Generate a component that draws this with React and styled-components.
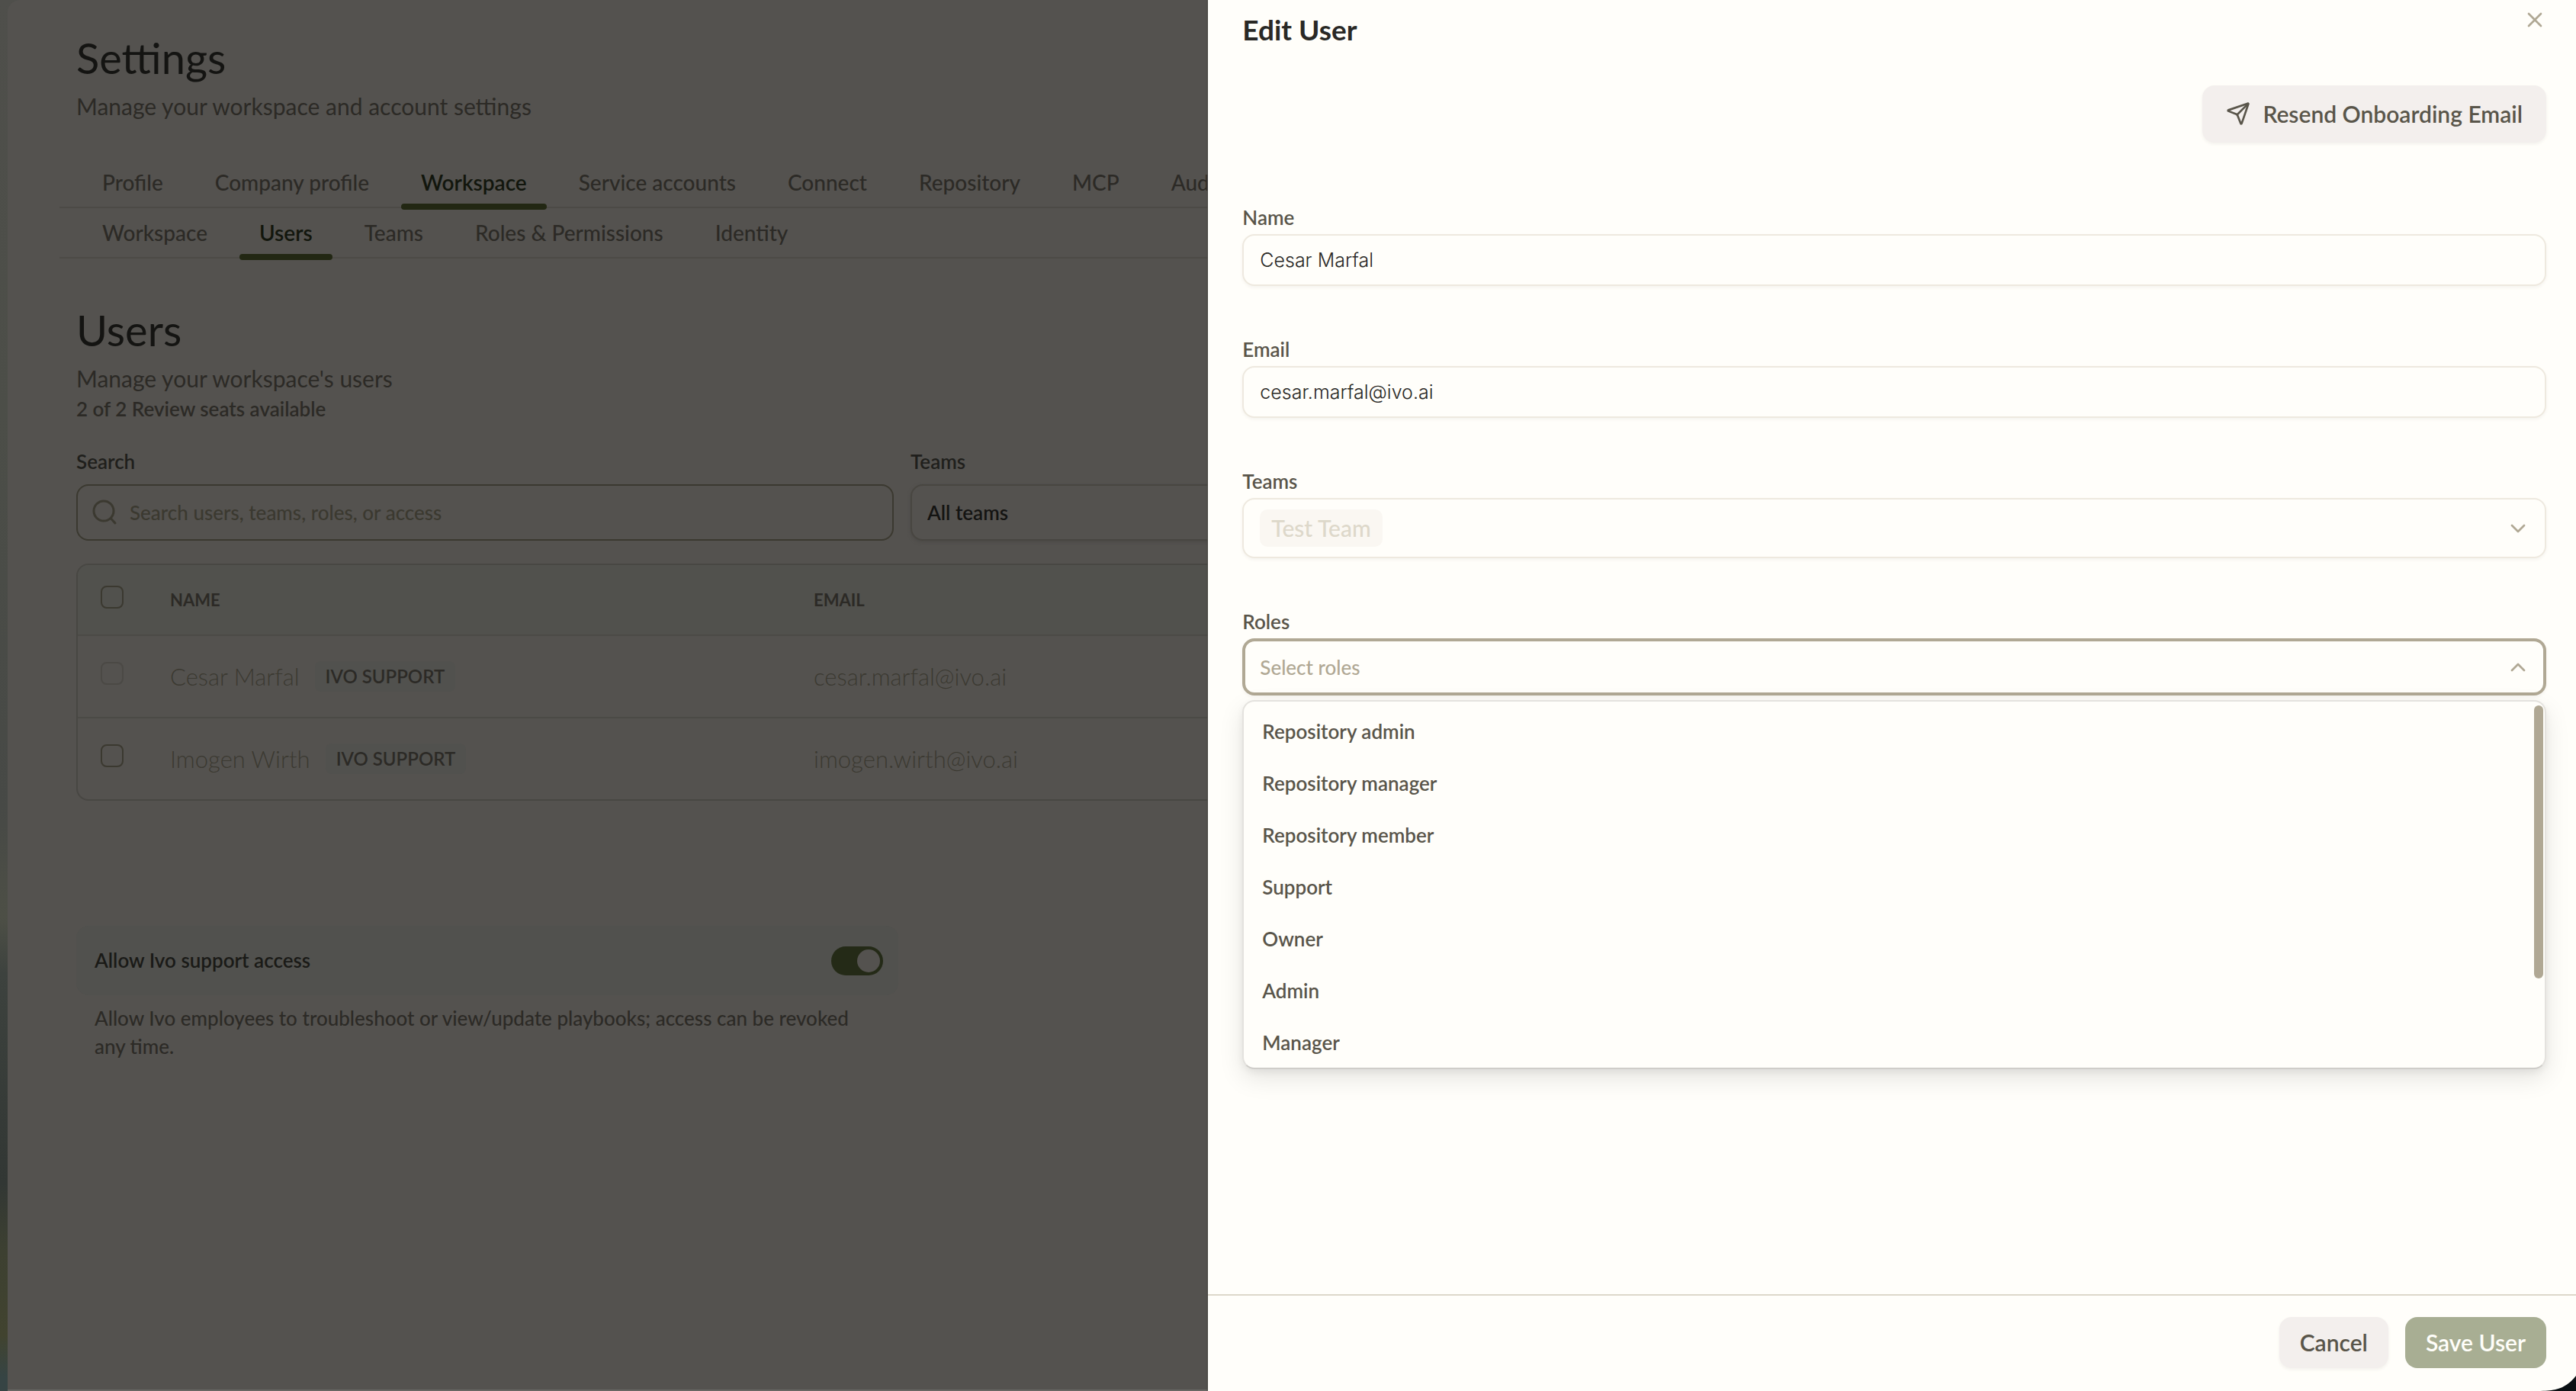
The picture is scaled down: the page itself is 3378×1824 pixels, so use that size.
import React, { useState } from 'react'
import styled, { createGlobalStyle } from 'styled-components'
import { ChevronDown, ChevronUp, Send, X } from 'lucide-react'

const tabs = ['Profile', 'Company profile', 'Workspace', 'Service accounts', 'Connect', 'Repository', 'MCP', 'Aud']
const subTabs = ['Workspace', 'Users', 'Teams', 'Roles & Permissions', 'Identity']
const users = [
  { name: 'Cesar Marfal', email: 'cesar.marfal@ivo.ai', locked: true },
  { name: 'Imogen Wirth', email: 'imogen.wirth@ivo.ai', locked: false },
]
const roles = ['Repository admin', 'Repository manager', 'Repository member', 'Support', 'Owner', 'Admin', 'Manager']

const SearchIcon = () => (
  <svg width="34" height="34" viewBox="0 0 34 34" fill="none" stroke="currentColor" strokeWidth="3" strokeLinecap="round" aria-hidden="true">
    <circle cx="16" cy="15" r="13" />
    <path d="M25.5 25 31 31" />
  </svg>
)

const TabBar = ({ items, active, label }) => (
  <Tabs aria-label={label}>
    {items.map((item) => (
      <Tab key={item} href="#" $active={item === active}>{item}</Tab>
    ))}
  </Tabs>
)

const SettingsPage = () => {
  const [query, setQuery] = useState('')
  return (
    <Page>
      <Title>Settings</Title>
      <Subtitle>Manage your workspace and account settings</Subtitle>
      <TabGroup>
        <TabBar items={tabs} active="Workspace" label="Settings" />
        <TabBar items={subTabs} active="Users" label="Workspace" />
      </TabGroup>
      <SectionTitle>Users</SectionTitle>
      <Subtitle>Manage your workspace's users</Subtitle>
      <Seats>2 of 2 Review seats available</Seats>
      <Filters>
        <Filter>
          <FilterLabel htmlFor="search">Search</FilterLabel>
          <SearchBox>
            <SearchIcon />
            <SearchInput id="search" placeholder="Search users, teams, roles, or access" value={query} onChange={(e) => setQuery(e.target.value)} />
          </SearchBox>
        </Filter>
        <Filter>
          <FilterLabel htmlFor="team-filter">Teams</FilterLabel>
          <TeamSelect id="team-filter">
            <option>All teams</option>
          </TeamSelect>
        </Filter>
      </Filters>
      <TableFrame>
        <Table>
          <thead>
            <tr>
              <CheckHead><Checkbox type="checkbox" aria-label="Select all users" /></CheckHead>
              <NameHead>NAME</NameHead>
              <th>EMAIL</th>
            </tr>
          </thead>
          <tbody>
            {users.map((user) => (
              <tr key={user.email}>
                <td><Checkbox type="checkbox" disabled={user.locked} aria-label={user.name} /></td>
                <td>
                  <NameCell>
                    {user.name}
                    <Badge>IVO SUPPORT</Badge>
                  </NameCell>
                </td>
                <td>{user.email}</td>
              </tr>
            ))}
          </tbody>
        </Table>
      </TableFrame>
      <Support>
        <SupportRow>
          <label htmlFor="support-access">Allow Ivo support access</label>
          <Toggle id="support-access" type="checkbox" role="switch" defaultChecked />
        </SupportRow>
        <SupportText>
          Allow Ivo employees to troubleshoot or view/update playbooks; access can be revoked any time.
        </SupportText>
      </Support>
    </Page>
  )
}

const EditUser = () => {
  const [name, setName] = useState('Cesar Marfal')
  const [email, setEmail] = useState('cesar.marfal@ivo.ai')
  const [open, setOpen] = useState(true)
  return (
    <Drawer role="dialog" aria-labelledby="drawer-title">
      <DrawerHeader>
        <DrawerTitle id="drawer-title">Edit User</DrawerTitle>
        <CloseButton aria-label="Close"><X size={32} /></CloseButton>
      </DrawerHeader>
      <DrawerBody>
        <ResendButton><Send size={32} />Resend Onboarding Email</ResendButton>
        <Field>
          <Label htmlFor="name">Name</Label>
          <TextInput id="name" value={name} onChange={(e) => setName(e.target.value)} />
        </Field>
        <Field>
          <Label htmlFor="email">Email</Label>
          <TextInput id="email" type="email" value={email} onChange={(e) => setEmail(e.target.value)} />
        </Field>
        <Field>
          <Label htmlFor="teams">Teams</Label>
          <Picker id="teams" type="button" aria-haspopup="listbox">
            <Chip>Test Team</Chip>
            <ChevronDown size={32} />
          </Picker>
        </Field>
        <Field>
          <Label htmlFor="roles">Roles</Label>
          <Picker id="roles" type="button" aria-haspopup="listbox" aria-expanded={open} $open={open} onClick={() => setOpen(!open)}>
            Select roles
            {open ? <ChevronUp size={32} /> : <ChevronDown size={32} />}
          </Picker>
          {open && (
            <Menu>
              <Options role="listbox" aria-label="Roles">
                {roles.map((role) => (
                  <Option key={role} role="option" aria-selected="false">{role}</Option>
                ))}
              </Options>
              <ScrollThumb />
            </Menu>
          )}
        </Field>
      </DrawerBody>
      <DrawerFooter>
        <Button>Cancel</Button>
        <Button $primary>Save User</Button>
      </DrawerFooter>
      <Corner viewBox="0 0 54 20" aria-hidden="true">
        <path d="M0 20C22 20 30 18 37 14.5C44 11 50 5.5 54 0V20Z" fill="#0a1013" />
      </Corner>
    </Drawer>
  )
}

export default function App() {
  return (
    <Shell>
      <GlobalStyle />
      <SettingsPage />
      <EditUser />
    </Shell>
  )
}

const GlobalStyle = createGlobalStyle`
  *, *::before, *::after {
    box-sizing: border-box;
  }
  body {
    margin: 0;
    font-family: Lato, "Liberation Sans", sans-serif;
    font-size: 26px;
    color: #2c2a26;
  }
  button, input, select {
    font: inherit;
  }
  h1, h2, p {
    margin: 0;
  }
`
const Shell = styled.div`
  display: flex;
  min-height: 100vh;
  padding-left: 10px;
  background: linear-gradient(#4f4f4b, #4c4e48 30%, #474946 58%, #4d4f46 66%, #3d423e 70%, #323734 85%, #3d4031 90%, #41432f 96%, #364444 99%);
`
const Page = styled.main`
  flex: 1;
  min-width: 0;
  overflow: hidden;
  padding: 42px 0 0 90px;
  background: #54524f;
  border-bottom: 2px solid #686764;
  border-top-left-radius: 16px;
`
const Title = styled.h1`
  font-size: 56px;
  line-height: 68px;
  font-weight: 400;
  color: #141412;
`
const SectionTitle = styled.h2`
  margin-top: 60px;
  font-size: 56px;
  line-height: 68px;
  font-weight: 400;
  color: #141412;
`
const Subtitle = styled.p`
  margin-top: 9px;
  font-size: 30px;
  line-height: 40px;
`
const TabGroup = styled.div`
  margin: 48px 0 0 -22px;
`
const Tabs = styled.nav`
  display: flex;
  gap: 16px;
  padding-left: 30px;
  border-bottom: 2px solid #4c4a46;
`
const Tab = styled.a`
  position: relative;
  flex: none;
  padding: 14px 26px;
  font-size: 28px;
  line-height: 36px;
  white-space: nowrap;
  text-decoration: none;
  font-weight: ${(props) => (props.$active ? 600 : 500)};
  color: ${(props) => (props.$active ? '#12160d' : '#2c2a26')};

  &:last-child {
    padding-right: 0;
  }
  &::after {
    content: "";
    display: ${(props) => (props.$active ? 'block' : 'none')};
    position: absolute;
    left: 0;
    right: 0;
    bottom: -4px;
    height: 8px;
    border-radius: 4px;
    background: #222713;
  }
`
const Seats = styled.p`
  margin-top: 4px;
  line-height: 32px;
  font-weight: 600;
`
const Filters = styled.div`
  display: flex;
  gap: 22px;
  margin-top: 37px;
`
const Filter = styled.div`
  display: flex;
  flex-direction: column;
  flex: none;
  gap: 14px;
  width: 1072px;
`
const FilterLabel = styled.label`
  line-height: 32px;
  font-weight: 600;
  color: #201f1c;
`
const SearchBox = styled.div`
  display: flex;
  align-items: center;
  gap: 16px;
  height: 74px;
  padding: 0 18px;
  border: 2px solid #3b3930;
  border-radius: 16px;
  color: #3b3930;
`
const SearchInput = styled.input`
  flex: 1;
  padding: 0;
  border: none;
  outline: none;
  background: none;
  color: #141412;

  &::placeholder {
    font-weight: 500;
    color: #3b3930;
  }
`
const TeamSelect = styled.select`
  appearance: none;
  height: 74px;
  padding: 0 20px;
  border: 2px solid #484641;
  border-radius: 16px;
  background: none;
  box-shadow: 0 2px 4px #4c4a47;
  font-weight: 600;
  color: #141412;
`
const TableFrame = styled.div`
  width: 2200px;
  margin-top: 30px;
  border: 2px solid #484743;
  border-radius: 16px;
  overflow: hidden;
`
const Table = styled.table`
  width: 100%;
  table-layout: fixed;
  border-collapse: separate;
  border-spacing: 0;
  text-align: left;
  font-size: 31px;
  font-weight: 300;
  color: #3b3931;

  th {
    height: 93px;
    padding: 0;
    background: #51514d;
    border-bottom: 2px solid #4b4a46;
    font-size: 22px;
    font-weight: 700;
    color: #2c2a26;
  }
  td {
    height: 108px;
    padding: 0;
    border-bottom: 2px solid #4b4a46;
  }
  tr:last-child td {
    height: 106px;
    border-bottom: none;
  }
`
const CheckHead = styled.th`
  width: 121px;
`
const NameHead = styled.th`
  width: 844px;
`
const Checkbox = styled.input`
  appearance: none;
  display: block;
  width: 30px;
  height: 30px;
  margin: 0 0 8px 30px;
  border: 2px solid ${(props) => (props.disabled ? '#4b4945' : '#3b3930')};
  border-radius: 8px;
`
const NameCell = styled.div`
  display: flex;
  align-items: center;
  gap: 20px;
`
const Badge = styled.span`
  padding: 0 14px;
  border-radius: 8px;
  background: #51514e;
  font-size: 24px;
  line-height: 40px;
  font-weight: 600;
  color: #2c2a26;
`
const Support = styled.section`
  width: 1078px;
  margin-top: 164px;
  line-height: 37px;
`
const SupportRow = styled.div`
  display: flex;
  align-items: center;
  justify-content: space-between;
  height: 91px;
  padding: 0 20px 0 24px;
  border-radius: 16px;
  background: #51514e;
  font-weight: 600;
  color: #1a1a17;
`
const Toggle = styled.input`
  appearance: none;
  display: flex;
  align-items: center;
  justify-content: flex-end;
  width: 68px;
  height: 38px;
  margin: 0;
  padding: 4px;
  border-radius: 19px;
  background: #242a17;

  &::before {
    content: "";
    width: 30px;
    height: 30px;
    border-radius: 50%;
    background: #54524f;
  }
`
const SupportText = styled.p`
  padding: 12px 24px;
  font-weight: 500;
`

const Drawer = styled.aside`
  position: relative;
  flex: none;
  display: flex;
  flex-direction: column;
  width: 53.1vw;
  background: #fffefa;
  box-shadow: -1px 0 2px #45443f;
  color: #59554a;
`
const DrawerHeader = styled.header`
  display: flex;
  justify-content: space-between;
  align-items: flex-start;
  padding: 10px 38px 0 45px;
`
const DrawerTitle = styled.h2`
  padding-top: 5px;
  font-size: 37px;
  line-height: 48px;
  font-weight: 700;
  color: #292825;
`
const CloseButton = styled.button`
  display: flex;
  padding: 0;
  border: none;
  background: none;
  color: #b0a894;
  cursor: pointer;
`
const DrawerBody = styled.div`
  flex: 1;
  display: flex;
  flex-direction: column;
  padding: 49px 39px 0 45px;
`
const Button = styled.button`
  height: 67px;
  padding: 0 27px 2px;
  border: none;
  border-radius: 16px;
  background: ${(props) => (props.$primary ? '#a8ae93' : '#f3efed')};
  box-shadow: ${(props) => (props.$primary ? 'none' : '0 2px 4px #f3f1ec')};
  color: ${(props) => (props.$primary ? '#fffefa' : '#59554a')};
  font-size: 30px;
  font-weight: 600;
  cursor: pointer;
`
const ResendButton = styled(Button)`
  display: flex;
  align-items: center;
  align-self: flex-end;
  gap: 16px;
  height: 75px;
  padding: 0 31px 2px;
  margin-bottom: 15px;
`
const Field = styled.div`
  position: relative;
  display: flex;
  flex-direction: column;
  gap: 6px;
  margin-top: 67px;
`
const Label = styled.label`
  line-height: 32px;
  font-weight: 600;
`
const TextInput = styled.input`
  height: 68px;
  padding: 0 21px;
  border: 2px solid #eee9df;
  border-radius: 16px;
  outline: none;
  background: #fffefa;
  box-shadow: 0 2px 4px #f5f3ee;
  font-family: Inter, "Liberation Sans", sans-serif;
  font-size: 25px;
  font-weight: 300;
  color: #292825;
`
const Picker = styled.button`
  display: flex;
  align-items: center;
  justify-content: space-between;
  height: ${(props) => (props.$open ? 75 : 79)}px;
  padding: ${(props) => (props.$open ? '0 17px 0 19px' : '0 19px 0 21px')};
  border: ${(props) => (props.$open ? '4px solid #b0a894' : '2px solid #eee9df')};
  border-radius: 16px;
  background: #fffefa;
  box-shadow: 0 2px 4px #f5f3ee;
  font-weight: 500;
  color: #b0a894;
`
const Chip = styled.span`
  padding: 0 15px;
  border-radius: 10px;
  background: #faf7f2;
  font-size: 30px;
  line-height: 49px;
  font-weight: 500;
  color: #ddd8ca;
`
const Menu = styled.div`
  position: absolute;
  top: 100%;
  left: 0;
  right: 0;
  z-index: 1;
  height: 484px;
  margin-top: 6px;
  padding-top: 5px;
  overflow: hidden;
  border: 2px solid #e4e2de;
  border-bottom-color: #cfcdc9;
  border-radius: 16px;
  background: #fffefa;
  box-shadow: 0 12px 32px rgba(0, 0, 0, 0.1), 0 4px 10px rgba(0, 0, 0, 0.06);
`
const Options = styled.ul`
  margin: 0;
  padding: 0;
  list-style: none;
`
const Option = styled.li`
  height: 68px;
  padding: 0 24px;
  line-height: 68px;
  font-weight: 600;
`
const ScrollThumb = styled.div`
  position: absolute;
  top: 5px;
  right: 2px;
  width: 12px;
  height: 358px;
  border-radius: 6px;
  background: #b0a894;
`
const DrawerFooter = styled.footer`
  display: flex;
  justify-content: flex-end;
  gap: 22px;
  padding: 28px 39px 30px;
  border-top: 2px solid #ddd8ca;
`
const Corner = styled.svg`
  position: absolute;
  right: 0;
  bottom: 0;
  width: 54px;
  height: 20px;
`
